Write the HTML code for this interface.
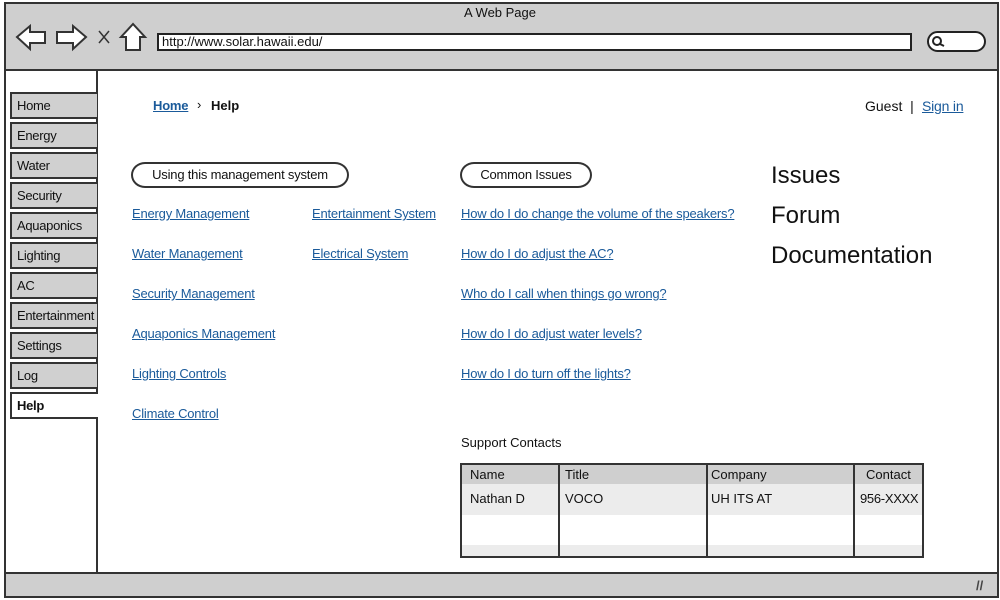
<!DOCTYPE html>
<html><head><meta charset="utf-8"><style>
*{margin:0;padding:0;box-sizing:border-box}
body{width:1000px;height:600px;background:#fff;font-family:"Liberation Sans",sans-serif;position:relative;overflow:hidden;color:#111}
.a{position:absolute}
a,.l{color:#1a5a9a;text-decoration:underline;font-size:13px;position:absolute;white-space:nowrap;letter-spacing:-0.2px}
.nav{position:absolute;left:10px;width:87px;height:27px;background:#d0d0d0;border:2px solid #333;border-right:none;font-size:13px;padding:4px 0 0 5px;letter-spacing:-0.3px;white-space:nowrap;overflow:hidden}
.pill{position:absolute;height:26px;border:2px solid #333;border-radius:14px/13px;font-size:13px;text-align:center;line-height:22px;background:#fff;letter-spacing:-0.2px}
.big{position:absolute;font-size:24px;left:771px}
</style></head><body>
<div class="a" style="left:4px;top:2px;width:995px;height:596px;border:2px solid #333;background:#fff"></div>
<div class="a" style="left:4px;top:2px;width:995px;height:69px;border:2px solid #333;background:#cfcfcf"></div>
<div class="a" style="left:0;top:5px;width:1000px;text-align:center;font-size:13px">A Web Page</div>
<svg class="a" style="left:14px;top:22px" width="140" height="32" viewBox="0 0 140 32">
<path d="M3 15 L16 4 L16 10 L31 10 L31 21 L16 21 L16 27 Z" fill="#fff" stroke="#333" stroke-width="2"/>
<path d="M72 15 L59 4 L59 10 L43 10 L43 21 L59 21 L59 27 Z" fill="#fff" stroke="#333" stroke-width="2"/>
<path d="M85 9 L95 21 M95 9 L85 21" stroke="#333" stroke-width="1.5"/>
<path d="M119 2 L107 15 L112 15 L112 28 L126 28 L126 15 L131 15 Z" fill="#fff" stroke="#333" stroke-width="2"/>
</svg>
<div class="a" style="left:157px;top:33px;width:755px;height:18px;border:2px solid #222;background:#fff;font-size:13px;padding-left:3px;line-height:14px">http://www.solar.hawaii.edu/</div>
<div class="a" style="left:927px;top:31px;width:59px;height:21px;border:2px solid #222;border-radius:11px;background:#fff"></div>
<svg class="a" style="left:931px;top:35px" width="14" height="14"><circle cx="6" cy="6" r="4" fill="none" stroke="#222" stroke-width="2"/><path d="M9 9 L13 11" stroke="#222" stroke-width="2"/></svg>
<div class="a" style="left:96px;top:70px;width:2px;height:504px;background:#333"></div>
<div class="a" style="left:4px;top:572px;width:995px;height:26px;border:2px solid #333;background:#cfcfcf"></div>
<div class="a" style="left:976px;top:578px;font-size:13px;font-weight:bold;color:#444">//</div>
<div class="nav" style="top:92px">Home</div>
<div class="nav" style="top:122px">Energy</div>
<div class="nav" style="top:152px">Water</div>
<div class="nav" style="top:182px">Security</div>
<div class="nav" style="top:212px">Aquaponics</div>
<div class="nav" style="top:242px">Lighting</div>
<div class="nav" style="top:272px">AC</div>
<div class="nav" style="top:302px">Entertainment</div>
<div class="nav" style="top:332px">Settings</div>
<div class="nav" style="top:362px">Log</div>
<div class="nav" style="top:392px;background:#fff;font-weight:bold;width:88px">Help</div>
<a style="left:153px;top:98px;font-weight:bold">Home</a>
<div class="a" style="left:197px;top:97px;font-size:13px">›</div>
<div class="a" style="left:211px;top:98px;font-size:13px;font-weight:bold">Help</div>
<div class="a" style="left:865px;top:98px;font-size:14px">Guest&nbsp; |</div>
<a style="left:922px;top:98px;font-size:14px">Sign in</a>
<div class="pill" style="left:131px;top:162px;width:218px">Using this management system</div>
<div class="pill" style="left:460px;top:162px;width:132px">Common Issues</div>
<a style="left:132px;top:206px">Energy Management</a>
<a style="left:132px;top:246px">Water Management</a>
<a style="left:132px;top:286px">Security Management</a>
<a style="left:132px;top:326px">Aquaponics Management</a>
<a style="left:132px;top:366px">Lighting Controls</a>
<a style="left:132px;top:406px">Climate Control</a>
<a style="left:312px;top:206px">Entertainment System</a>
<a style="left:312px;top:246px">Electrical System</a>
<a style="left:461px;top:206px">How do I do change the volume of the speakers?</a>
<a style="left:461px;top:246px">How do I do adjust the AC?</a>
<a style="left:461px;top:286px">Who do I call when things go wrong?</a>
<a style="left:461px;top:326px">How do I do adjust water levels?</a>
<a style="left:461px;top:366px">How do I do turn off the lights?</a>
<div class="big" style="top:162px">Issues</div>
<div class="big" style="top:202px">Forum</div>
<div class="big" style="top:242px">Documentation</div>
<div class="a" style="left:461px;top:435px;font-size:13px">Support Contacts</div>
<div class="a" style="left:460px;top:463px;width:464px;height:95px;border:2px solid #333;background:#fff;font-size:13px">
<div class="a" style="left:0;top:0;width:460px;height:19px;background:#cfcfcf"></div>
<div class="a" style="left:0;top:19px;width:460px;height:31px;background:#ececec"></div>
<div class="a" style="left:0;top:80px;width:460px;height:11px;background:#ececec"></div>
<div class="a" style="left:96px;top:0;width:2px;height:91px;background:#333"></div>
<div class="a" style="left:244px;top:0;width:2px;height:91px;background:#333"></div>
<div class="a" style="left:391px;top:0;width:2px;height:91px;background:#333"></div>
<div class="a" style="left:8px;top:2px">Name</div>
<div class="a" style="left:103px;top:2px">Title</div>
<div class="a" style="left:249px;top:2px">Company</div>
<div class="a" style="left:404px;top:2px">Contact</div>
<div class="a" style="left:8px;top:26px">Nathan D</div>
<div class="a" style="left:103px;top:26px">VOCO</div>
<div class="a" style="left:249px;top:26px">UH ITS AT</div>
<div class="a" style="left:398px;top:26px;letter-spacing:-0.3px">956-XXXX</div>
</div>
</body></html>
